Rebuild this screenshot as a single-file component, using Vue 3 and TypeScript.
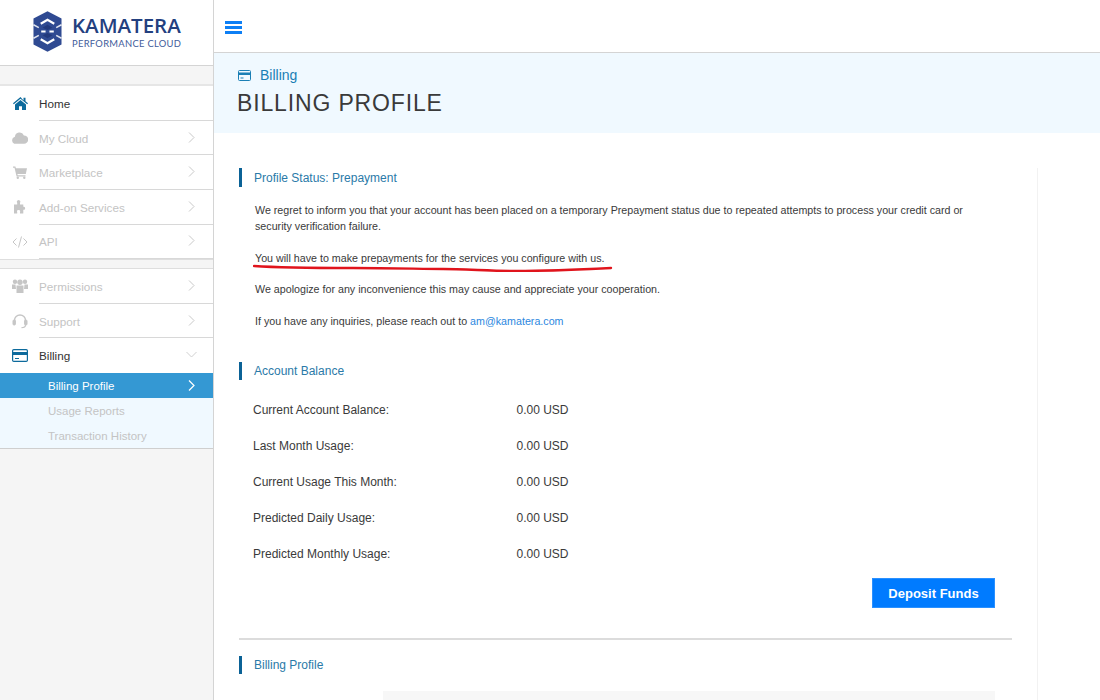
<script setup lang="ts">
interface NavItem { label: string; icon: string; arrow?: boolean; active?: boolean }
const groupA: NavItem[] = [
  { label: 'Home', icon: 'home', active: true },
  { label: 'My Cloud', icon: 'cloud', arrow: true },
  { label: 'Marketplace', icon: 'cart', arrow: true },
  { label: 'Add-on Services', icon: 'puzzle', arrow: true },
  { label: 'API', icon: 'code', arrow: true },
]
const groupB: NavItem[] = [
  { label: 'Permissions', icon: 'users', arrow: true },
  { label: 'Support', icon: 'headset', arrow: true },
]
const balances = [
  'Current Account Balance:',
  'Last Month Usage:',
  'Current Usage This Month:',
  'Predicted Daily Usage:',
  'Predicted Monthly Usage:',
]
</script>

<template>
  <div class="app">
    <aside class="sidebar">
      <div class="logo">
        <svg class="logo-mark" width="29" height="41" viewBox="0 0 30 42">
          <path d="M15 0 29.500 7.500V34.500L15 42 .5 34.500V7.500Z" fill="#2f4a92" />
          <path d="M8 13 15 9 22 13M8.500 21h4.500M17 21h4.500M8 29 15 33 22 29" fill="none" stroke="#fff" stroke-width="2.300" />
          <path d="M.5 14 6 17M29.500 14 24 17M.5 28 6 25M29.500 28 24 25" fill="none" stroke="#fff" stroke-width="1.600" opacity=".85" />
          <path d="M15 14 20 17 15 19.500 10 17ZM15 22.500 20 25 15 28 10 25Z" fill="#22397c" />
        </svg>
        <div class="logo-text">
          <div class="logo-name">KAMATERA</div>
          <div class="logo-sub">PERFORMANCE CLOUD</div>
        </div>
      </div>
      <div class="strip"></div>
      <template v-for="(group, gi) in [groupA, groupB]" :key="gi">
        <div v-if="gi === 1" class="gap"></div>
        <div
          v-for="item in group"
          :key="item.label"
          class="nav-row"
          :class="{ active: item.active }"
        >
          <span class="nav-icon">
            <svg v-if="item.icon === 'home'" width="15" height="13" viewBox="0 0 15 13"><path d="M7.500 0 0 6.300l.8 1L7.500 1.800l6.700 5.500.8-1-2.500-2.100V.8h-2v2.700Z" fill="currentColor"/><path d="M2 7.600 7.500 3l5.500 4.600V13H9V9.300H6V13H2Z" fill="currentColor"/></svg>
            <svg v-else-if="item.icon === 'cloud'" width="16" height="12" viewBox="0 0 16 12"><path d="M3.800 11.800a3.600 3.600 0 0 1-.9-7.100A4.700 4.700 0 0 1 11.900 3.400 4.200 4.200 0 0 1 12 11.800Z" fill="currentColor"/></svg>
            <svg v-else-if="item.icon === 'cart'" width="14" height="13" viewBox="0 0 14 13"><path d="M0 .5h2.400l.5 1.800H14l-1.200 5.700H4.400l.3 1.200h7.800v1.300H3.600L1.500 1.800H0Z" fill="currentColor"/><circle cx="4.800" cy="11.800" r="1.200" fill="currentColor"/><circle cx="11.300" cy="11.800" r="1.200" fill="currentColor"/></svg>
            <svg v-else-if="item.icon === 'puzzle'" width="15" height="14" viewBox="0 0 15 14"><path d="M1 4.500h3.200V2.800a1.700 1.700 0 1 1 2.800 0V4.500h3.300V6.800a1.500 1.500 0 1 1 0 2.900V13.500H7V12a1.500 1.500 0 1 0-2.800 0v1.500H1Z" fill="currentColor"/></svg>
            <svg v-else-if="item.icon === 'code'" width="16" height="12" viewBox="0 0 16 12" fill="none" stroke="currentColor" stroke-width="1"><path d="M4.500 2.500 1 6l3.500 3.500M11.500 2.500 15 6l-3.500 3.500M9.500 .5 6.500 11.500"/></svg>
            <svg v-else-if="item.icon === 'users'" width="16" height="14" viewBox="0 0 16 14"><circle cx="3" cy="2.800" r="2.200" fill="currentColor"/><circle cx="13" cy="2.800" r="2.200" fill="currentColor"/><circle cx="8" cy="3.300" r="2.700" fill="currentColor"/><path d="M0 5.500h3.500L4 10H0ZM12.500 5.500H16V10H12ZM4.500 6.500h7V14h-7Z" fill="currentColor"/></svg>
            <svg v-else width="16" height="15" viewBox="0 0 16 15" fill="none" stroke="currentColor"><path d="M2.500 9V6.500a5.500 5.500 0 0 1 11 0V9" stroke-width="1.400"/><rect x="1" y="6" width="2.400" height="5" rx="1" fill="currentColor"/><rect x="12.600" y="6" width="2.400" height="5" rx="1" fill="currentColor"/><path d="M13.500 11c0 2-2 2.700-4 2.700" stroke-width="1.200"/></svg>
          </span>
          <span class="nav-label">{{ item.label }}</span>
          <svg v-if="item.arrow" class="chev" width="7" height="11" viewBox="0 0 7 11"><path d="M1 .5 6 5.500 1 10.500" fill="none" stroke="currentColor"/></svg>
        </div>
      </template>
      <div class="nav-row billing">
        <span class="nav-icon">
          <svg width="16" height="13" viewBox="0 0 16 13"><rect x=".6" y=".6" width="14.800" height="11.800" rx="1.200" fill="#fff" stroke="#0c6a9c" stroke-width="1.200"/><rect x="1" y="3" width="14" height="3" fill="#0c6a9c"/><rect x="3" y="9" width="4" height="1" fill="#0c6a9c"/></svg>
        </span>
        <span class="nav-label">Billing</span>
        <svg class="chev" width="11" height="7" viewBox="0 0 11 7"><path d="M.5 1 5.500 6 10.500 1" fill="none" stroke="currentColor"/></svg>
      </div>
      <div class="sub-active">
        <span>Billing Profile</span>
        <svg width="7" height="11" viewBox="0 0 7 11"><path d="M1 .5 6 5.500 1 10.500" fill="none" stroke="#fff" stroke-width="1.200"/></svg>
      </div>
      <div class="sub-list">
        <div class="sub-item">Usage Reports</div>
        <div class="sub-item">Transaction History</div>
      </div>
    </aside>

    <main class="main">
      <div class="topbar">
        <div class="burger"><i></i><i></i><i></i></div>
      </div>
      <header class="head">
        <div class="crumb">
          <svg width="13" height="11" viewBox="0 0 13 11"><rect x=".5" y=".5" width="12" height="10" rx="1" fill="#f0f9ff" stroke="#1a7fb5"/><rect x="1" y="2.500" width="11" height="2.500" fill="#1a7fb5"/><rect x="2.500" y="7.500" width="3" height="1" fill="#1a7fb5"/></svg>
          <span>Billing</span>
        </div>
        <h1>BILLING PROFILE</h1>
      </header>

      <div class="body">
        <div class="panel">
          <h2 class="sec sec-first">Profile Status: Prepayment</h2>
          <div class="notice">
            <p class="wrap">We regret to inform you that your account has been placed on a temporary Prepayment status due to repeated attempts to process your credit card or security verification failure.</p>
            <p class="marked">
              You will have to make prepayments for the services you configure with us.
              <svg class="scribble" width="360" height="10" viewBox="0 0 360 10"><path d="M1 4C30 6 60 6 100 6S170 7 190 7 240 9 262 9 320 8 358 6" fill="none" stroke="#e0141c" stroke-width="2.400" stroke-linecap="round"/></svg>
            </p>
            <p>We apologize for any inconvenience this may cause and appreciate your cooperation.</p>
            <p>If you have any inquiries, please reach out to <a>am@kamatera.com</a></p>
          </div>

          <h2 class="sec sec-balance">Account Balance</h2>
          <div class="balance">
            <div v-for="b in balances" :key="b" class="bal-row">
              <span class="bal-label">{{ b }}</span>
              <span>0.00 USD</span>
            </div>
          </div>
          <div class="actions"><button class="deposit">Deposit Funds</button></div>
          <hr class="rule" />
          <h2 class="sec sec-profile">Billing Profile</h2>
          <div class="stub"></div>
        </div>
      </div>
    </main>
  </div>
</template>

<style>
html, body { margin: 0; height: 100%; overflow: hidden; background: #fff; }
</style>

<style scoped>
.app { display: flex; width: 1100px; height: 700px; overflow: hidden; font-family: "Liberation Sans", Arial, sans-serif; color: #333; }
.sidebar { width: 213px; flex: none; background: #f5f5f5; border-right: 1px solid #d4d4d4; }
.logo { height: 65px; background: #fff; border-bottom: 1px solid #d4d4d4; display: flex; align-items: center; padding-left: 33px; gap: 10px; box-sizing: content-box; }
.logo-mark { flex: none; margin-top: -2px; }
.logo-text { margin-top: -3px; }
.logo-name { font-family: "Open Sans", sans-serif; font-size: 20.500px; line-height: 22px; font-weight: 600; color: #23407f; }
.logo-sub { font-family: "Lato", sans-serif; font-size: 9.400px; line-height: 11px; color: #3f5c9b; letter-spacing: .3px; margin-top: 2px; }
.strip { height: 18.200px; border-bottom: 2px solid #e6e6e6; }
.gap { height: 8px; border-top: 1px solid #dedede; border-bottom: 1px solid #dedede; }
.nav-row { height: 34.600px; box-sizing: border-box; display: flex; align-items: center; background: #fff; position: relative; font-size: 11.700px; color: #c4c4c4; padding-left: 39px; padding-right: 18px; }
.nav-row::after { content: ""; position: absolute; left: 39px; right: 0; bottom: 0; height: 1px; background: #d8d8d8; }
.nav-row.active { color: #333; }
.nav-row.billing { color: #333; height: 35px; }
.nav-row.billing::after { display: none; }
.nav-icon { position: absolute; left: 12px; top: 0; bottom: 0; width: 16px; display: flex; align-items: center; justify-content: center; color: #c6c6c6; }
.active .nav-icon { color: #0c6a9c; }
.nav-label { flex: 1; }
.chev { color: #c8c8c8; flex: none; margin-top: -2px; }
.billing .chev { margin-right: -2px; color: #d0d0d0; }
.sub-active { height: 25px; background: #3498d3; color: #fff; font-size: 11.500px; display: flex; align-items: center; justify-content: space-between; padding: 0 18px 0 48px; }
.sub-list { background: #f0f9ff; border-bottom: 1px solid #cfcfcf; }
.sub-item { height: 25px; display: flex; align-items: center; padding-left: 48px; font-size: 11.500px; color: #c4c4c4; }
.main { flex: 1; min-width: 0; display: flex; flex-direction: column; }
.topbar { height: 52px; flex: none; border-bottom: 1px solid #d4d4d4; display: flex; align-items: center; padding-left: 11px; }
.burger { width: 17px; display: flex; flex-direction: column; gap: 2px; margin-top: 2px; }
.burger i { display: block; height: 3px; background: #0d7ff5; }
.head { height: 80px; flex: none; box-sizing: border-box; background: #f0f9ff; padding: 14px 0 0 23px; }
.crumb { display: flex; align-items: center; gap: 9px; font-size: 14px; line-height: 17px; color: #1a7fb5; padding-left: 1px; }
.head h1 { margin: 6px 0 0; font-size: 23px; line-height: 27px; font-weight: 400; color: #3a3a3a; letter-spacing: .85px; }
.body { flex: 1; padding: 35px 0 0 25px; min-height: 0; }
.panel { width: 799px; height: 100%; box-sizing: border-box; border-right: 1px solid #f2f2f2; padding-right: 25px; }
.sec { margin: 0; font-size: 12px; font-weight: 400; line-height: 18px; color: #2a7aa8; border-left: 3px solid #0b6296; padding-left: 12px; }
.sec-first { padding-top: 1px; }
.notice { padding: 15px 0 0 16px; font-size: 10.700px; color: #3a3a3a; line-height: 16px; }
.notice p { margin: 0 0 15.500px; }
.notice .wrap { width: 730px; }
.marked { position: relative; }
.scribble { position: absolute; left: -2px; top: 12px; }
.notice a { color: #2b87e0; }
.sec-balance { margin-top: 33px; }
.balance { padding: 13px 0 0 14px; font-size: 12px; color: #3a3a3a; }
.bal-row { height: 35.800px; display: flex; align-items: center; }
.bal-label { width: 263.500px; }
.actions { display: flex; justify-content: flex-end; padding-right: 17px; margin-top: 7px; }
.deposit { width: 123px; height: 30px; border: 1px solid #2a90ff; background: #007bff; color: #fff; font: 700 13px "Liberation Sans", Arial, sans-serif; padding: 0; }
.rule { border: 0; height: 1.500px; background: #dcdcdc; margin: 30px 0 0; }
.sec-profile { margin-top: 16px; }
.stub { height: 30px; background: #f7f7f7; margin: 17px 17px 0 144px; }
</style>
